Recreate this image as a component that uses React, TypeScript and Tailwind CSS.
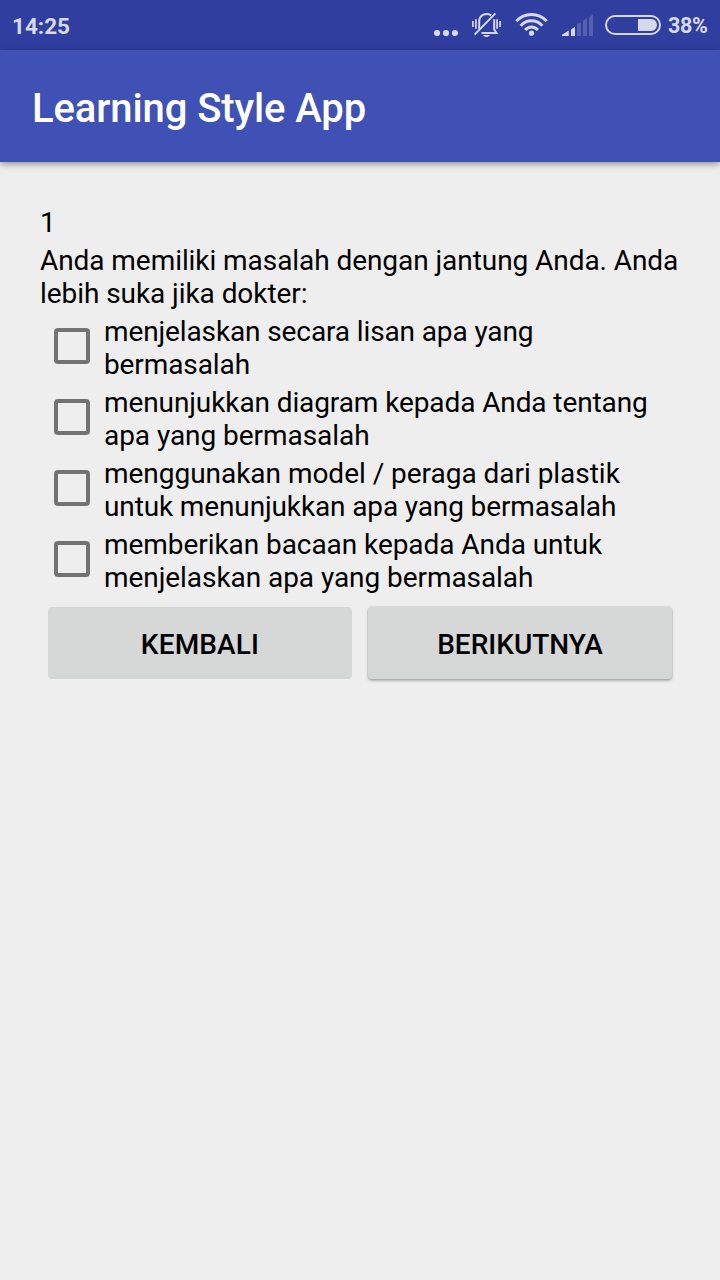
import { useState } from "react";

const options = [
  { first: "menjelaskan secara lisan apa yang", second: "bermasalah", a: "tracking-[-0.12px]", b: "tracking-[-0.1px]" },
  { first: "menunjukkan diagram kepada Anda tentang", second: "apa yang bermasalah", a: "tracking-[-0.1px]", b: "tracking-[-0.05px]" },
  { first: "menggunakan model / peraga dari plastik", second: "untuk menunjukkan apa yang bermasalah", a: "tracking-[-0.03px]", b: "tracking-[-0.13px]" },
  { first: "memberikan bacaan kepada Anda untuk", second: "menjelaskan apa yang bermasalah", a: "tracking-[-0.06px]", b: "tracking-[-0.06px]" },
];

function MoreDots() {
  return (
    <svg className="h-[50px] w-6 fill-current" viewBox="434 0 24 50">
      <circle cx="437" cy="33" r="3.1" />
      <circle cx="446" cy="33" r="3.1" />
      <circle cx="455" cy="33" r="3.1" />
    </svg>
  );
}

function SilentBell() {
  return (
    <svg className="ml-3.5 h-[50px] w-[30px]" viewBox="472 0 30 50" fill="none" stroke="currentColor" strokeWidth="1.7">
      <path d="M472.9 21v6M475.9 19.3v9.500M500.100 21v6M497.100 19.300v9.500" />
      <path d="M479.200 29V21c0-4.200 3.200-7 7.300-7 1.800 0 3.400.5 4.700 1.300M494.200 19.300V29.500l2.300 3.500H481.500" strokeWidth="2" />
      <path d="M474.600 34.600L495.400 13.400" strokeWidth="2" />
      <path d="M483 35h7c-.8 1.400-2 2-3.500 2s-2.700-.6-3.500-2z" fill="currentColor" stroke="none" />
    </svg>
  );
}

function Wifi() {
  return (
    <svg className="ml-[13px] h-[50px] w-[34px]" viewBox="515 0 34 50" fill="none" stroke="currentColor" strokeWidth="3">
      <path d="M516.300 21.200C524.800 12.300 538.200 12.300 546.700 21.200" />
      <path d="M520.700 25.700C526.900 19.200 536.100 19.200 542.300 25.700" />
      <path d="M525.100 30.100C528.900 26 534.100 26 537.900 30.100" />
      <circle cx="531.500" cy="33.200" r="2.600" fill="currentColor" stroke="none" />
    </svg>
  );
}

function Signal() {
  return (
    <svg className="ml-[13px] h-[50px] w-8 fill-current" viewBox="562 0 32 50">
      <path d="M562 36v-1.200l6.800-4.300V36zM571 36v-6.600l4-2.700V36z" />
      <path opacity=".22" d="M577 36V24.500l4-2.500V36zM583 36V20.800l4-2.800V36zM589 36V17.200l4-2.700V36z" />
    </svg>
  );
}

function Battery() {
  return (
    <svg className="ml-[11px] h-[50px] w-14" viewBox="605 0 56 50">
      <rect x="606" y="16" width="54" height="18" rx="9" fill="none" stroke="currentColor" strokeWidth="2" />
      <path d="M638 19h13.500a5.500 6 0 0 1 0 12H638z" fill="currentColor" />
    </svg>
  );
}

export default function App() {
  const [checked, setChecked] = useState<boolean[]>([false, false, false, false]);

  return (
    <div className="flex h-[1280px] w-[720px] flex-col overflow-hidden bg-[#eeeeee] font-['Roboto',sans-serif] text-[28px] leading-[33px] text-black">
      <div className="flex h-[50px] shrink-0 items-center bg-[#303f9f] pr-3 pl-3 leading-[26px] font-bold text-[#d6d9ec]">
        <span className="mt-px mr-auto text-[22.5px]">14:25</span>
        <MoreDots />
        <SilentBell />
        <Wifi />
        <Signal />
        <Battery />
        <span className="mt-0.5 ml-[7px] w-10 text-[21.5px] tracking-[-0.35px] whitespace-nowrap">38%</span>
      </div>
      <header className="flex h-28 shrink-0 items-center bg-[#3f51b5] px-8 shadow-[0_2px_7px_rgba(0,0,0,0.4)]">
        <h1 className="mt-1 text-[40px] leading-[47px] font-medium tracking-[-0.1px] text-white">Learning Style App</h1>
      </header>
      <main className="flex flex-col gap-[5px] px-10 pt-11">
        <p>1</p>
        <p className="tracking-[-0.065px] whitespace-nowrap">
          Anda memiliki masalah dengan jantung Anda. Anda
          <br />
          lebih suka jika dokter:
        </p>
        {options.map((option, i) => (
          <label key={option.first} className="flex items-start whitespace-nowrap">
            <input
              type="checkbox"
              checked={checked[i]}
              onChange={() => setChecked(checked.map((c, j) => (j === i ? !c : c)))}
              className="mt-[13px] mr-3.5 ml-3.5 size-9 shrink-0 appearance-none rounded-[4px] border-4 border-[#737373] checked:bg-[#ff4081]"
            />
            <span className="flex flex-col">
              <span className={option.a}>{option.first}</span>
              <span className={option.b}>{option.second}</span>
            </span>
          </label>
        ))}
        <div className="mt-2 grid grid-cols-2 gap-4 px-2">
          <button className="h-[72px] rounded-[4px] bg-[#d6d7d7] pt-[3px] font-medium tracking-[0.15px]">KEMBALI</button>
          <button className="h-[72px] rounded-[4px] bg-[#d6d7d7] pt-[3px] font-medium shadow-[0_2px_3px_rgba(0,0,0,0.25),0_0_0_1px_rgba(0,0,0,0.06)]">
            BERIKUTNYA
          </button>
        </div>
      </main>
    </div>
  );
}
